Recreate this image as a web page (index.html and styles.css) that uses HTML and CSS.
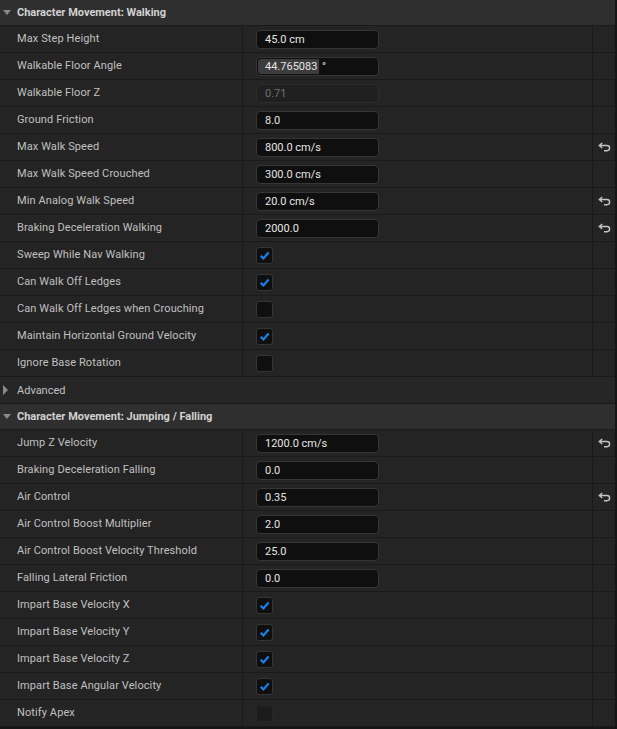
FILE: index.html
```html
<!DOCTYPE html>
<html lang="en">

<head>
    <meta charset="UTF-8">
    <title>Details - Character Movement</title>
    <link rel="stylesheet" href="styles.css">
</head>

<body>
    <div class="details-panel">
        <div class="category">
            <span class="arrow down"></span>Character Movement: Walking
        </div>

        <div class="prop-row">
            <div class="prop-name">Max Step Height</div>
            <div class="prop-value"><div class="num-box">45.0 cm</div></div>
            <div class="prop-reset"></div>
        </div>
        <div class="prop-row">
            <div class="prop-name">Walkable Floor Angle</div>
            <div class="prop-value">
                <div class="num-box slider"><span class="slider-fill">44.765083</span>&nbsp;°</div>
            </div>
            <div class="prop-reset"></div>
        </div>
        <div class="prop-row">
            <div class="prop-name">Walkable Floor Z</div>
            <div class="prop-value"><div class="num-box disabled">0.71</div></div>
            <div class="prop-reset"></div>
        </div>
        <div class="prop-row">
            <div class="prop-name">Ground Friction</div>
            <div class="prop-value"><div class="num-box">8.0</div></div>
            <div class="prop-reset"></div>
        </div>
        <div class="prop-row">
            <div class="prop-name">Max Walk Speed</div>
            <div class="prop-value"><div class="num-box">800.0 cm/s</div></div>
            <div class="prop-reset"><svg class="reset-icon" viewBox="0 0 13 10"><path d="M4.2 1 L1.3 3.5 L4.2 6 M1.6 3.5 H9 A2.6 2.6 0 0 1 9 8.7 H6"/></svg></div>
        </div>
        <div class="prop-row">
            <div class="prop-name">Max Walk Speed Crouched</div>
            <div class="prop-value"><div class="num-box">300.0 cm/s</div></div>
            <div class="prop-reset"></div>
        </div>
        <div class="prop-row">
            <div class="prop-name">Min Analog Walk Speed</div>
            <div class="prop-value"><div class="num-box">20.0 cm/s</div></div>
            <div class="prop-reset"><svg class="reset-icon" viewBox="0 0 13 10"><path d="M4.2 1 L1.3 3.5 L4.2 6 M1.6 3.5 H9 A2.6 2.6 0 0 1 9 8.7 H6"/></svg></div>
        </div>
        <div class="prop-row">
            <div class="prop-name">Braking Deceleration Walking</div>
            <div class="prop-value"><div class="num-box">2000.0</div></div>
            <div class="prop-reset"><svg class="reset-icon" viewBox="0 0 13 10"><path d="M4.2 1 L1.3 3.5 L4.2 6 M1.6 3.5 H9 A2.6 2.6 0 0 1 9 8.7 H6"/></svg></div>
        </div>
        <div class="prop-row">
            <div class="prop-name">Sweep While Nav Walking</div>
            <div class="prop-value"><div class="check-box"><svg viewBox="0 0 15 15"><path d="M3.6 7.8 L6.4 10.4 L11.6 4.6"/></svg></div></div>
            <div class="prop-reset"></div>
        </div>
        <div class="prop-row">
            <div class="prop-name">Can Walk Off Ledges</div>
            <div class="prop-value"><div class="check-box"><svg viewBox="0 0 15 15"><path d="M3.6 7.8 L6.4 10.4 L11.6 4.6"/></svg></div></div>
            <div class="prop-reset"></div>
        </div>
        <div class="prop-row">
            <div class="prop-name">Can Walk Off Ledges when Crouching</div>
            <div class="prop-value"><div class="check-box"></div></div>
            <div class="prop-reset"></div>
        </div>
        <div class="prop-row">
            <div class="prop-name">Maintain Horizontal Ground Velocity</div>
            <div class="prop-value"><div class="check-box"><svg viewBox="0 0 15 15"><path d="M3.6 7.8 L6.4 10.4 L11.6 4.6"/></svg></div></div>
            <div class="prop-reset"></div>
        </div>
        <div class="prop-row">
            <div class="prop-name">Ignore Base Rotation</div>
            <div class="prop-value"><div class="check-box"></div></div>
            <div class="prop-reset"></div>
        </div>

        <div class="advanced-row">
            <span class="arrow right"></span>Advanced
        </div>

        <div class="category">
            <span class="arrow down"></span>Character Movement: Jumping / Falling
        </div>

        <div class="prop-row">
            <div class="prop-name">Jump Z Velocity</div>
            <div class="prop-value"><div class="num-box">1200.0 cm/s</div></div>
            <div class="prop-reset"><svg class="reset-icon" viewBox="0 0 13 10"><path d="M4.2 1 L1.3 3.5 L4.2 6 M1.6 3.5 H9 A2.6 2.6 0 0 1 9 8.7 H6"/></svg></div>
        </div>
        <div class="prop-row">
            <div class="prop-name">Braking Deceleration Falling</div>
            <div class="prop-value"><div class="num-box">0.0</div></div>
            <div class="prop-reset"></div>
        </div>
        <div class="prop-row">
            <div class="prop-name">Air Control</div>
            <div class="prop-value"><div class="num-box">0.35</div></div>
            <div class="prop-reset"><svg class="reset-icon" viewBox="0 0 13 10"><path d="M4.2 1 L1.3 3.5 L4.2 6 M1.6 3.5 H9 A2.6 2.6 0 0 1 9 8.7 H6"/></svg></div>
        </div>
        <div class="prop-row">
            <div class="prop-name">Air Control Boost Multiplier</div>
            <div class="prop-value"><div class="num-box">2.0</div></div>
            <div class="prop-reset"></div>
        </div>
        <div class="prop-row">
            <div class="prop-name">Air Control Boost Velocity Threshold</div>
            <div class="prop-value"><div class="num-box">25.0</div></div>
            <div class="prop-reset"></div>
        </div>
        <div class="prop-row">
            <div class="prop-name">Falling Lateral Friction</div>
            <div class="prop-value"><div class="num-box">0.0</div></div>
            <div class="prop-reset"></div>
        </div>
        <div class="prop-row">
            <div class="prop-name">Impart Base Velocity X</div>
            <div class="prop-value"><div class="check-box"><svg viewBox="0 0 15 15"><path d="M3.6 7.8 L6.4 10.4 L11.6 4.6"/></svg></div></div>
            <div class="prop-reset"></div>
        </div>
        <div class="prop-row">
            <div class="prop-name">Impart Base Velocity Y</div>
            <div class="prop-value"><div class="check-box"><svg viewBox="0 0 15 15"><path d="M3.6 7.8 L6.4 10.4 L11.6 4.6"/></svg></div></div>
            <div class="prop-reset"></div>
        </div>
        <div class="prop-row">
            <div class="prop-name">Impart Base Velocity Z</div>
            <div class="prop-value"><div class="check-box"><svg viewBox="0 0 15 15"><path d="M3.6 7.8 L6.4 10.4 L11.6 4.6"/></svg></div></div>
            <div class="prop-reset"></div>
        </div>
        <div class="prop-row">
            <div class="prop-name">Impart Base Angular Velocity</div>
            <div class="prop-value"><div class="check-box"><svg viewBox="0 0 15 15"><path d="M3.6 7.8 L6.4 10.4 L11.6 4.6"/></svg></div></div>
            <div class="prop-reset"></div>
        </div>
        <div class="prop-row">
            <div class="prop-name">Notify Apex</div>
            <div class="prop-value"><div class="check-box disabled"></div></div>
            <div class="prop-reset"></div>
        </div>
    </div>
</body>

</html>
```
FILE: styles.css
```css
body {
    margin: 0;
    background-color: #151515;
    font-family: Roboto, "Noto Sans", sans-serif;
    font-size: 11px;
    color: #c0c0c0;
}

.details-panel {
    width: 615px;
}

.category {
    height: 25px;
    display: flex;
    align-items: center;
    background-color: #2f2f2f;
    border-bottom: 1px solid #1a1a1a;
    font-weight: bold;
    color: #d2d2d2;
    padding-left: 17px;
    position: relative;
}

.arrow {
    position: absolute;
    left: 3px;
    width: 0;
    height: 0;
}

.arrow.down {
    top: 10px;
    border-left: 4px solid transparent;
    border-right: 4px solid transparent;
    border-top: 5px solid #8a8a8a;
}

.arrow.right {
    top: 8px;
    border-top: 5px solid transparent;
    border-bottom: 5px solid transparent;
    border-left: 5px solid #8a8a8a;
}

.prop-row {
    display: flex;
    height: 26px;
    background-color: #242424;
    border-bottom: 1px solid #1a1a1a;
}

.prop-name {
    width: 225px;
    padding-left: 17px;
    padding-bottom: 1px;
    display: flex;
    align-items: center;
    border-right: 1px solid #1a1a1a;
    letter-spacing: 0.1px;
    white-space: nowrap;
}

.prop-value {
    flex: 1;
    display: flex;
    align-items: center;
    padding-left: 13px;
    border-right: 1px solid #1a1a1a;
}

.prop-reset {
    width: 22px;
    display: flex;
    align-items: center;
    justify-content: center;
}

.reset-icon {
    width: 13px;
    height: 10px;
    fill: none;
    stroke: #c4c4c4;
    stroke-width: 1.4;
}

.num-box {
    width: 113px;
    height: 17px;
    padding-left: 8px;
    display: flex;
    align-items: center;
    background-color: #0f0f0f;
    border: 1px solid #363636;
    border-radius: 4px;
    color: #e6e6e6;
}

.num-box.slider {
    padding-left: 1px;
    width: 120px;
}

.slider-fill {
    background-color: #3c3c3c;
    border-radius: 3px 0 0 3px;
    height: 15px;
    display: flex;
    align-items: center;
    padding-left: 7px;
    padding-right: 2px;
}

.num-box.disabled {
    background-color: #202020;
    border-color: #2c2c2c;
    color: #707070;
}

.check-box {
    width: 15px;
    height: 15px;
    background-color: #0f0f0f;
    border: 1px solid #353535;
    border-radius: 3px;
}

.check-box svg {
    width: 15px;
    height: 15px;
    fill: none;
    stroke: #1a80ea;
    stroke-width: 2.2;
}

.check-box.disabled {
    background-color: #1c1c1c;
    border-color: #262626;
}

.advanced-row {
    height: 26px;
    display: flex;
    align-items: center;
    padding-left: 17px;
    background-color: #262626;
    border-bottom: 1px solid #1a1a1a;
    position: relative;
}
```
